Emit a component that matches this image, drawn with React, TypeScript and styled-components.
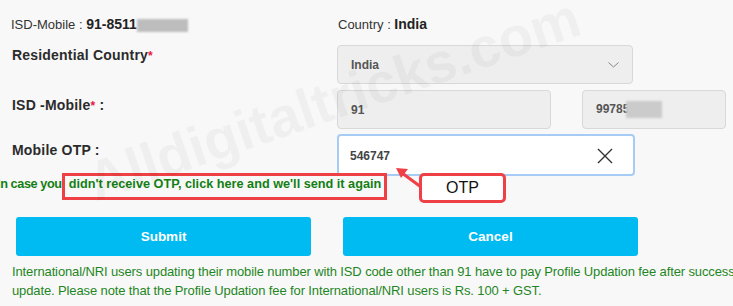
import React from 'react';
import styled, { createGlobalStyle } from 'styled-components';

const Global = createGlobalStyle`
  html, body { margin: 0; padding: 0; background: #f8f8f8; }
  body { font-family: "Liberation Sans", Arial, sans-serif; color: #333; overflow: hidden; }
`;

const Page = styled.div`
  position: relative;
  width: 733px;
  height: 306px;
  overflow: hidden;
  display: flex;
  flex-direction: column;
`;

const InfoRow = styled.div`
  display: grid;
  grid-template-columns: 338px 1fr;
  height: 45px;
  box-sizing: border-box;
  padding-top: 16px;
  line-height: 17px;
`;

const InfoCell = styled.div<{ $pl?: number }>`
  padding-left: ${(p) => p.$pl ?? 0}px;
  font-size: 13px;
  color: #333;
  white-space: nowrap;
`;

const InfoValue = styled.span`
  font-size: 14px;
  font-weight: bold;
  color: #222;
`;

const Blur = styled.span<{ $w: number; $h: number; $c: string }>`
  display: inline-block;
  vertical-align: middle;
  width: ${(p) => p.$w}px;
  height: ${(p) => p.$h}px;
  background: ${(p) => p.$c};
  filter: blur(1px);
`;

const FormRow = styled.div<{ $mt?: number }>`
  display: grid;
  grid-template-columns: 337px 1fr;
  align-items: start;
  margin-top: ${(p) => p.$mt ?? 0}px;
`;

const Label = styled.div<{ $pt: number }>`
  padding-left: 12px;
  padding-top: ${(p) => p.$pt}px;
  font-size: 14px;
  line-height: 17px;
  font-weight: bold;
  color: #2b2b2b;
  letter-spacing: 0.2px;
  white-space: nowrap;
`;

const Star = styled.span`
  color: #e8173f;
  font-size: 12px;
`;

const Controls = styled.div`
  display: flex;
  gap: 31px;
`;

const Box = styled.div<{ $w: number; $h?: number }>`
  box-sizing: border-box;
  width: ${(p) => p.$w}px;
  height: ${(p) => p.$h ?? 39}px;
  background: #eeeeee;
  border: 1px solid #d8d8d8;
  border-radius: 4px;
  display: flex;
  align-items: center;
  justify-content: space-between;
  padding: 0 13px 0 13px;
  font-size: 12px;
  font-weight: bold;
  color: #555;
`;

const OtpBox = styled.div`
  box-sizing: border-box;
  width: 298px;
  height: 42px;
  background: #fff;
  border: 2px solid #a6cbf5;
  border-radius: 4px;
  display: flex;
  align-items: center;
  justify-content: space-between;
  padding: 1px 20px 0 11px;
  font-size: 12px;
  font-weight: bold;
  color: #444;
`;

const Resend = styled.div`
  margin-top: 1px;
  font-size: 12.7px;
  line-height: 14px;
  font-weight: bold;
  color: #137f13;
  white-space: nowrap;
  text-indent: -3px;
`;

const Prefix = styled.span`
  letter-spacing: -0.4px;
`;

const Highlight = styled.span`
  border: 3px solid #ef4046;
  padding: 1px 3px 6px 4px;
  margin-left: 0;
`;

const Buttons = styled.div`
  display: flex;
  gap: 32px;
  padding-left: 16px;
  margin-top: 26px;
`;

const Button = styled.button`
  width: 295px;
  height: 39px;
  border: none;
  border-radius: 3px;
  background: #00baf2;
  color: #fff;
  font-family: "Liberation Sans", Arial, sans-serif;
  font-weight: bold;
  font-size: 13.5px;
  padding: 0;
`;

const Note = styled.p`
  margin: 6px 0 0 0;
  padding-left: 12px;
  font-family: "Liberation Sans", Arial, sans-serif;
  font-size: 13px;
  letter-spacing: -0.12px;
  line-height: 19px;
  color: #1f861f;
  white-space: nowrap;
`;

const Callout = styled.div`
  position: absolute;
  left: 419px;
  top: 173px;
  width: 87px;
  height: 30px;
  box-sizing: border-box;
  border: 3px solid #ef4046;
  border-radius: 5px;
  background: #fff;
  font-size: 16px;
  color: #111;
  display: flex;
  align-items: center;
  justify-content: center;
`;

const ArrowSvg = styled.svg`
  position: absolute;
  left: 390px;
  top: 160px;
`;

const Watermark = styled.div`
  position: absolute;
  left: 100px;
  top: 150px;
  font-size: 56px;
  line-height: 64px;
  font-weight: bold;
  color: rgba(0, 0, 0, 0.035);
  transform: rotate(-19deg);
  transform-origin: left bottom;
  white-space: nowrap;
  pointer-events: none;
`;

export default function App() {
  return (
    <>
      <Global />
      <Page>
        <InfoRow>
          <InfoCell $pl={11}>
            ISD-Mobile : <InfoValue>91-8511</InfoValue>
            <Blur $w={51} $h={13} $c="#bdbdbd" />
          </InfoCell>
          <InfoCell>
            Country : <InfoValue>India</InfoValue>
          </InfoCell>
        </InfoRow>

        <FormRow>
          <Label $pt={2}>
            Residential Country<Star>*</Star>
          </Label>
          <Box $w={296}>
            <span>India</span>
            <svg width="11" height="6" viewBox="0 0 11 6">
              <polyline points="0.5,0.5 5.5,5 10.5,0.5" fill="none" stroke="#888" strokeWidth="1" />
            </svg>
          </Box>
        </FormRow>

        <FormRow $mt={6}>
          <Label $pt={7}>
            ISD -Mobile<Star>*</Star> :
          </Label>
          <Controls>
            <Box $w={214}>
              <span>91</span>
            </Box>
            <Box $w={144}>
              <span>
                99785
                <Blur $w={36} $h={17} $c="#cbcbcb" style={{ marginLeft: -3 }} />
              </span>
            </Box>
          </Controls>
        </FormRow>

        <FormRow $mt={5}>
          <Label $pt={8}>Mobile OTP :</Label>
          <OtpBox>
            <span>546747</span>
            <svg width="16" height="16" viewBox="0 0 16 16">
              <path d="M1 1 L15 15 M15 1 L1 15" stroke="#333" strokeWidth="1.4" fill="none" />
            </svg>
          </OtpBox>
        </FormRow>

        <Resend>
          <Prefix>In case you</Prefix>
          <Highlight>didn't receive OTP, click here and we'll send it again</Highlight>
        </Resend>

        <Buttons>
          <Button>Submit</Button>
          <Button>Cancel</Button>
        </Buttons>

        <Note>
          International/NRI users updating their mobile number with ISD code other than 91 have to pay Profile Updation fee after successful
          <br />
          update. Please note that the Profile Updation fee for International/NRI users is Rs. 100 + GST.
        </Note>

        <Watermark>Alldigitaltricks.com</Watermark>

        <ArrowSvg width="40" height="35" viewBox="0 0 40 35">
          <line x1="31" y1="27" x2="12" y2="13" stroke="#ef4046" strokeWidth="3" />
          <polygon points="6,8 18,9 11,18" fill="#ef4046" />
        </ArrowSvg>
        <Callout>OTP</Callout>
      </Page>
    </>
  );
}
